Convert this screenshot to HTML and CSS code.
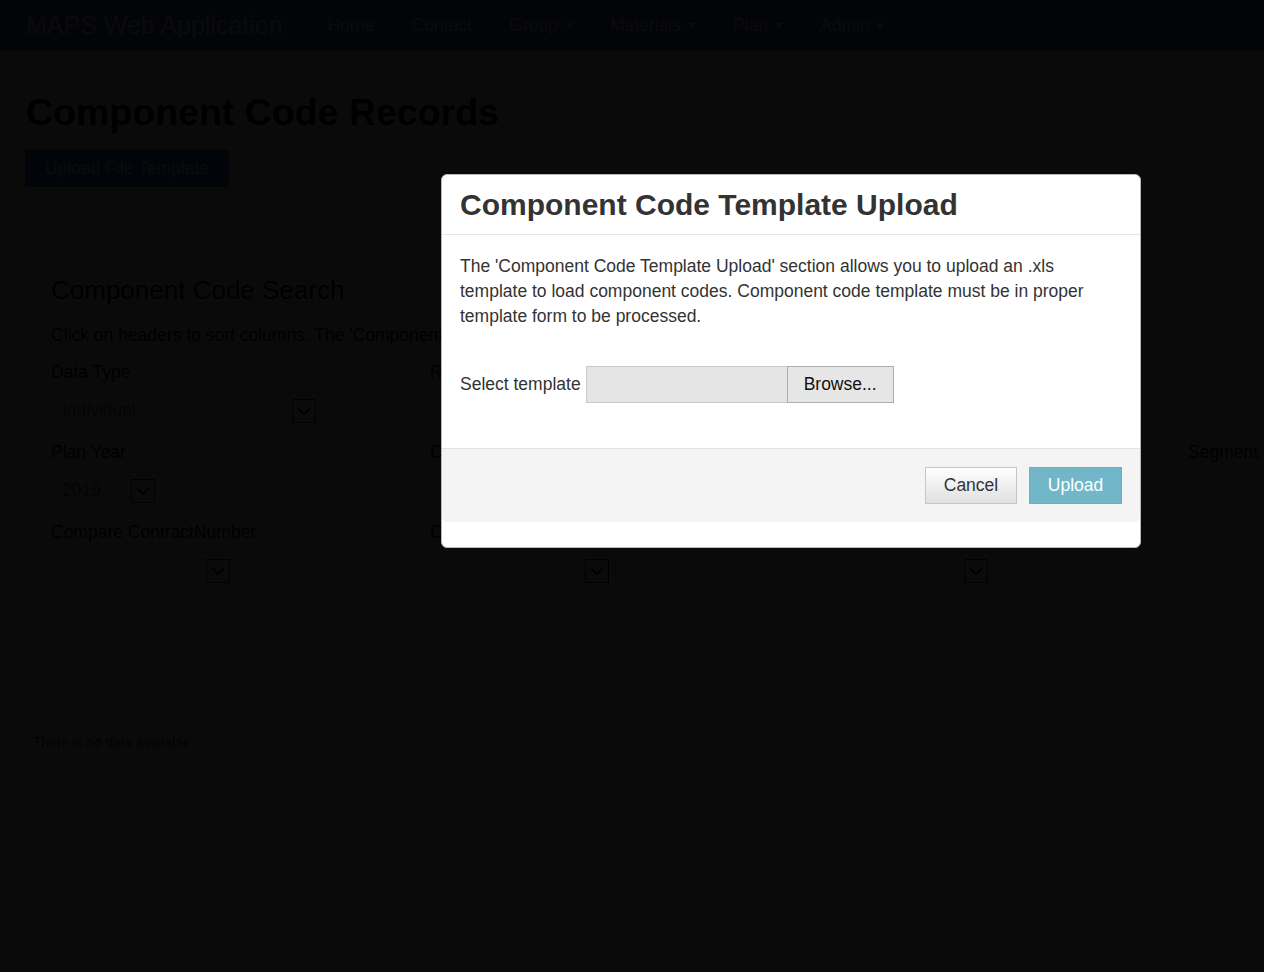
FILE: index.html
```html
<!DOCTYPE html>
<html lang="en">
<head>
<meta charset="utf-8">
<title>Component Code Records - MAPS Web Application</title>
<link rel="stylesheet" href="styles.css">
</head>
<body>
  <nav class="navbar">
    <a class="brand" href="#">MAPS Web Application</a>
    <ul class="nav">
      <li><a href="#">Home</a></li>
      <li><a href="#">Contact</a></li>
      <li><a href="#">Group<span class="caret"></span></a></li>
      <li><a href="#">Materials<span class="caret"></span></a></li>
      <li><a href="#">Plan<span class="caret"></span></a></li>
      <li><a href="#">Admin<span class="caret"></span></a></li>
    </ul>
  </nav>

  <main class="page">
    <h1 class="page-title">Component Code Records</h1>
    <button class="btn btn-primary" type="button">Upload File Template</button>

    <section class="search-panel">
      <h3 class="search-title">Component Code Search</h3>
      <p class="search-hint">Click on headers to sort columns. The 'Component Code Search' section allows you to search component codes.</p>
      <div class="search-grid">
        <div class="field">
          <label class="field-label">Data Type</label>
          <div class="select w-272"><span class="select-value">Individual</span><span class="select-arrow"><svg width="14" height="8" viewBox="0 0 14 8"><path d="M1 1l6 6 6-6" fill="none" stroke="#000" stroke-width="1.8"/></svg></span></div>
        </div>
        <div class="field">
          <label class="field-label">Region</label>
          <div class="select w-186"><span class="select-value"></span><span class="select-arrow"><svg width="14" height="8" viewBox="0 0 14 8"><path d="M1 1l6 6 6-6" fill="none" stroke="#000" stroke-width="1.8"/></svg></span></div>
        </div>
        <div class="field">
          <label class="field-label">Product</label>
          <div class="select w-186"><span class="select-value"></span><span class="select-arrow"><svg width="14" height="8" viewBox="0 0 14 8"><path d="M1 1l6 6 6-6" fill="none" stroke="#000" stroke-width="1.8"/></svg></span></div>
        </div>
        <div class="field"></div>

        <div class="field">
          <label class="field-label">Plan Year</label>
          <div class="select w-111"><span class="select-value">2019</span><span class="select-arrow"><svg width="14" height="8" viewBox="0 0 14 8"><path d="M1 1l6 6 6-6" fill="none" stroke="#000" stroke-width="1.8"/></svg></span></div>
        </div>
        <div class="field">
          <label class="field-label">ContractNumber</label>
          <div class="select w-186"><span class="select-value"></span><span class="select-arrow"><svg width="14" height="8" viewBox="0 0 14 8"><path d="M1 1l6 6 6-6" fill="none" stroke="#000" stroke-width="1.8"/></svg></span></div>
        </div>
        <div class="field">
          <label class="field-label">PBP</label>
          <div class="select w-186"><span class="select-value"></span><span class="select-arrow"><svg width="14" height="8" viewBox="0 0 14 8"><path d="M1 1l6 6 6-6" fill="none" stroke="#000" stroke-width="1.8"/></svg></span></div>
        </div>
        <div class="field">
          <label class="field-label">Segment</label>
          <div class="select w-186"><span class="select-value"></span><span class="select-arrow"><svg width="14" height="8" viewBox="0 0 14 8"><path d="M1 1l6 6 6-6" fill="none" stroke="#000" stroke-width="1.8"/></svg></span></div>
        </div>

        <div class="field">
          <label class="field-label">Compare ContractNumber</label>
          <div class="select w-186"><span class="select-value"></span><span class="select-arrow"><svg width="14" height="8" viewBox="0 0 14 8"><path d="M1 1l6 6 6-6" fill="none" stroke="#000" stroke-width="1.8"/></svg></span></div>
        </div>
        <div class="field">
          <label class="field-label">Compare PBP</label>
          <div class="select w-186"><span class="select-value"></span><span class="select-arrow"><svg width="14" height="8" viewBox="0 0 14 8"><path d="M1 1l6 6 6-6" fill="none" stroke="#000" stroke-width="1.8"/></svg></span></div>
        </div>
        <div class="field">
          <label class="field-label">Compare Segment</label>
          <div class="select w-186"><span class="select-value"></span><span class="select-arrow"><svg width="14" height="8" viewBox="0 0 14 8"><path d="M1 1l6 6 6-6" fill="none" stroke="#000" stroke-width="1.8"/></svg></span></div>
        </div>
        <div class="field"></div>
      </div>
    </section>

    <section class="results">
      <p class="empty">There is no data available.</p>
    </section>
  </main>

  <div class="modal-backdrop"></div>

  <div class="modal" role="dialog" aria-labelledby="modal-title">
    <div class="modal-header">
      <h4 class="modal-title" id="modal-title">Component Code Template Upload</h4>
    </div>
    <div class="modal-body">
      <p class="modal-text">The 'Component Code Template Upload' section allows you to upload an .xls template to load component codes. Component code template must be in proper template form to be processed.</p>
      <div class="file-row">
        <span class="file-label">Select template</span>
        <span class="file-input"></span>
        <button class="btn-browse" type="button">Browse...</button>
      </div>
    </div>
    <div class="modal-footer">
      <button class="btn btn-default" type="button">Cancel</button>
      <button class="btn btn-info" type="button">Upload</button>
    </div>
  </div>
</body>
</html>
```

FILE: styles.css
```css
* {
  box-sizing: border-box;
}

html, body {
  margin: 0;
  padding: 0;
}

body {
  font-family: "Liberation Sans", Arial, sans-serif;
  font-size: 17.5px;
  line-height: 25px;
  color: #000;
  background: #fff;
  overflow: hidden;
  height: 972px;
}

/* ---------- navbar ---------- */
.navbar {
  display: flex;
  align-items: center;
  height: 50px;
  background: #3b6fd0;
  padding-left: 26px;
}

.brand {
  color: #fff;
  text-decoration: none;
  font-size: 25px;
  line-height: 50px;
  margin-right: 26px;
}

.nav {
  display: flex;
  list-style: none;
  margin: 0;
  padding: 0;
}

.nav a {
  display: flex;
  align-items: center;
  color: #fff;
  text-decoration: none;
  font-size: 17.5px;
  line-height: 50px;
  padding: 0 18.75px;
}

.caret {
  display: inline-block;
  width: 0;
  height: 0;
  margin-left: 6.5px;
  border-top: 5px solid #fff;
  border-left: 4px solid transparent;
  border-right: 4px solid transparent;
}

/* ---------- page ---------- */
.page {
  padding-left: 26px;
  width: 1600px;
}

.page-title {
  font-size: 37.5px;
  font-weight: bold;
  line-height: 41px;
  margin: 42px 0 17px;
}

.btn {
  font-family: inherit;
  font-size: 17.5px;
  height: 37px;
  padding: 0 17.5px;
  border: 1px solid transparent;
  border-radius: 0;
  cursor: pointer;
}

.btn-primary {
  display: block;
  margin-left: -1px;
  background: #2a5fc0;
  border-color: #2555ad;
  color: #fff;
  width: 204px;
}

.search-panel {
  margin-top: 51px;
  width: 1560px;
  border-left: 1px solid #ddd;
  padding: 38px 24px 20px;
}

.search-title {
  font-size: 26px;
  font-weight: normal;
  line-height: 29px;
  margin: 0 0 18px;
}

.search-hint {
  margin: 0 0 12px;
}

.search-grid {
  display: grid;
  grid-template-columns: repeat(4, 379px);
}

.field {
  margin-bottom: 11px;
  min-height: 69px;
}

.field-label {
  display: block;
  margin-bottom: 7px;
  white-space: nowrap;
}

.select {
  display: flex;
  align-items: center;
  justify-content: space-between;
  height: 37px;
  border: 1px solid #ccc;
  border-radius: 4px;
  padding: 0 6px 0 10px;
  color: #666;
}

.w-272 { width: 272px; }
.w-186 { width: 186px; }
.w-111 { width: 111px; }

.select-arrow {
  display: flex;
  align-items: center;
  justify-content: center;
  width: 24px;
  height: 24px;
  border: 1px solid #222;
}

.results {
  margin-top: 93px;
  width: 1560px;
  border-top: 1px solid #ddd;
  border-left: 1px solid #ddd;
  padding: 19px 6px;
}

.empty {
  margin: 0;
  font-size: 13.75px;
  line-height: 20px;
  color: #333;
}

/* ---------- modal ---------- */
.modal-backdrop {
  position: fixed;
  inset: 0;
  background: #000;
  opacity: 0.96;
  z-index: 10;
}

.modal {
  position: absolute;
  top: 174px;
  left: 441px;
  width: 700px;
  z-index: 20;
  background: #fff;
  border: 1px solid #b8b8b8;
  border-radius: 6px;
  padding-bottom: 25px;
  color: #333;
}

.modal-header {
  padding: 13px 18px 13px;
  border-bottom: 1px solid #e5e5e5;
}

.modal-title {
  margin: 0;
  font-size: 30px;
  line-height: 33px;
  font-weight: bold;
  color: #333;
}

.modal-body {
  padding: 19px 18px 45px;
}

.modal-text {
  margin: 0 0 37px;
}

.file-row {
  display: flex;
  align-items: center;
  height: 37px;
}

.file-label {
  margin-right: 5px;
}

.file-input {
  width: 201px;
  height: 37px;
  background: #e5e5e5;
  border: 1px solid #c9c9c9;
  border-right: none;
}

.btn-browse {
  font-family: inherit;
  font-size: 17.5px;
  height: 37px;
  padding: 0 16px;
  background: #e6e6e6;
  border: 1px solid #adadad;
  color: #111;
  border-radius: 0;
}

.modal-footer {
  display: flex;
  justify-content: flex-end;
  gap: 12px;
  padding: 18px 18px 18px;
  background: #f4f4f4;
  border-top: 1px solid #e2e2e2;
  border-radius: 0 0 6px 6px;
}

.btn-default {
  width: 92px;
  background: linear-gradient(to bottom, #fff 0%, #e0e0e0 100%);
  border-color: #c6c6c6;
  color: #333;
}

.btn-info {
  width: 93px;
  background: #72b6c9;
  border-color: #6aafc2;
  color: #fff;
}
```
